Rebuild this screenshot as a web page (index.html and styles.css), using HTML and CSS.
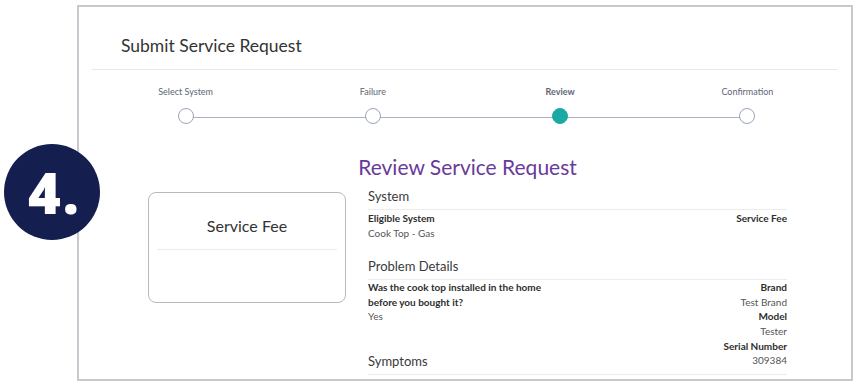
FILE: index.html
```html
<!DOCTYPE html>
<html lang="en">

<head>
    <meta charset="UTF-8">
    <meta name="viewport" content="width=device-width, initial-scale=1.0">
    <title>Submit Service Request</title>
    <link rel="stylesheet" href="styles.css">
</head>

<body>
    <div class="stage">
        <div class="badge">4.</div>
        <div class="frame">
            <h1 class="header">Submit Service Request</h1>

            <div class="steps">
                <div class="step">
                    <span class="step-label">Select System</span>
                    <span class="dot"></span>
                </div>
                <div class="step">
                    <span class="step-label">Failure</span>
                    <span class="dot"></span>
                </div>
                <div class="step active">
                    <span class="step-label">Review</span>
                    <span class="dot"></span>
                </div>
                <div class="step">
                    <span class="step-label">Confirmation</span>
                    <span class="dot"></span>
                </div>
            </div>

            <div class="review">
                <h2 class="review-title">Review Service Request</h2>
                <div class="review-body">
                    <div class="fee-card">
                        <div class="fee-title">Service Fee</div>
                    </div>
                    <div class="details">
                        <h3 class="section-title">System</h3>
                        <div class="pair">
                            <div>
                                <div class="label">Eligible System</div>
                                <div class="value">Cook Top - Gas</div>
                            </div>
                            <div class="right">
                                <div class="label">Service Fee</div>
                            </div>
                        </div>

                        <h3 class="section-title">Problem Details</h3>
                        <div class="right float">
                            <div class="label">Brand</div>
                            <div class="value">Test Brand</div>
                            <div class="label">Model</div>
                            <div class="value">Tester</div>
                            <div class="label">Serial Number</div>
                            <div class="value">309384</div>
                        </div>
                        <div class="question">
                            <div class="label">Was the cook top installed in the home before you bought it?</div>
                            <div class="value">Yes</div>
                        </div>

                        <h3 class="section-title">Symptoms</h3>
                    </div>
                </div>
            </div>
        </div>
    </div>
</body>

</html>
```

FILE: styles.css
```css
body {
    margin: 0;
    background-color: #FFFFFF;
    font-family: Lato, "Liberation Sans", sans-serif;
    color: #3a3a3a;
}
.stage {
    position: relative;
    width: 856px;
    height: 387px;
    overflow: hidden;
}
.badge {
    position: absolute;
    left: 4px;
    top: 144px;
    width: 96px;
    height: 96px;
    border-radius: 50%;
    background-color: #141e4f;
    color: #FFFFFF;
    font-family: "Open Sans", sans-serif;
    font-weight: 800;
    font-size: 56px;
    letter-spacing: 2px;
    display: flex;
    align-items: center;
    justify-content: center;
    padding-left: 5px;
    box-sizing: border-box;
    z-index: 2;
}
.frame {
    margin: 5px 0 0 77px;
    width: 776px;
    height: 376px;
    box-sizing: border-box;
    border: 2px solid #c8c9cf;
    padding: 0 10px 0 13px;
    overflow: hidden;
}
.header {
    margin: 0 4px 0 0;
    padding: 28px 0 12px 29px;
    border-bottom: 1px solid #e8e8e8;
    font-size: 17.5px;
    font-weight: 400;
    line-height: 22px;
    color: #333333;
}
.steps {
    display: grid;
    grid-template-columns: repeat(4, 1fr);
    margin-top: 16px;
    position: relative;
}
.steps::before {
    content: "";
    position: absolute;
    left: 12.5%;
    right: 12.5%;
    top: 31px;
    border-top: 1.5px solid #a9b1c2;
}
.step {
    display: flex;
    flex-direction: column;
    align-items: center;
    gap: 10px;
    position: relative;
}
.step-label {
    font-size: 9px;
    line-height: 12px;
    color: #5d6576;
}
.dot {
    width: 14px;
    height: 14px;
    border: 1.5px solid #9aa3ba;
    border-radius: 50%;
    background-color: #FFFFFF;
}
.step.active .step-label {
    font-weight: 700;
}
.step.active .dot {
    background-color: #19aaa6;
    border-color: #19aaa6;
}
.review {
    width: 639px;
    margin: 30px 0 0 56px;
}
.review-title {
    margin: 0 0 12px;
    text-align: center;
    font-size: 21px;
    font-weight: 400;
    line-height: 26px;
    color: #6a3a9a;
}
.review-body {
    display: flex;
    gap: 22px;
    align-items: flex-start;
}
.fee-card {
    width: 198px;
    height: 111px;
    box-sizing: border-box;
    border: 1px solid #b9b9bd;
    border-radius: 8px;
    padding: 0 8px;
    flex-shrink: 0;
}
.fee-title {
    text-align: center;
    font-size: 16px;
    line-height: 20px;
    padding: 23px 0 13px;
    border-bottom: 1px solid #ececec;
    color: #333333;
}
.details {
    flex: 1;
    margin-top: -4px;
    font-size: 10px;
    line-height: 14.6px;
}
.section-title {
    margin: 0;
    font-size: 13px;
    font-weight: 400;
    line-height: 17px;
    padding-bottom: 4px;
    border-bottom: 1px solid #ececec;
    color: #3a3a3a;
}
.pair {
    display: flex;
    justify-content: space-between;
    margin: 1px 0 18px;
}
.label {
    font-weight: 700;
    color: #2e2e2e;
}
.value {
    color: #555555;
}
.right {
    text-align: right;
}
.float {
    float: right;
}
.question {
    width: 200px;
    margin: 0 0 29px;
}
```
